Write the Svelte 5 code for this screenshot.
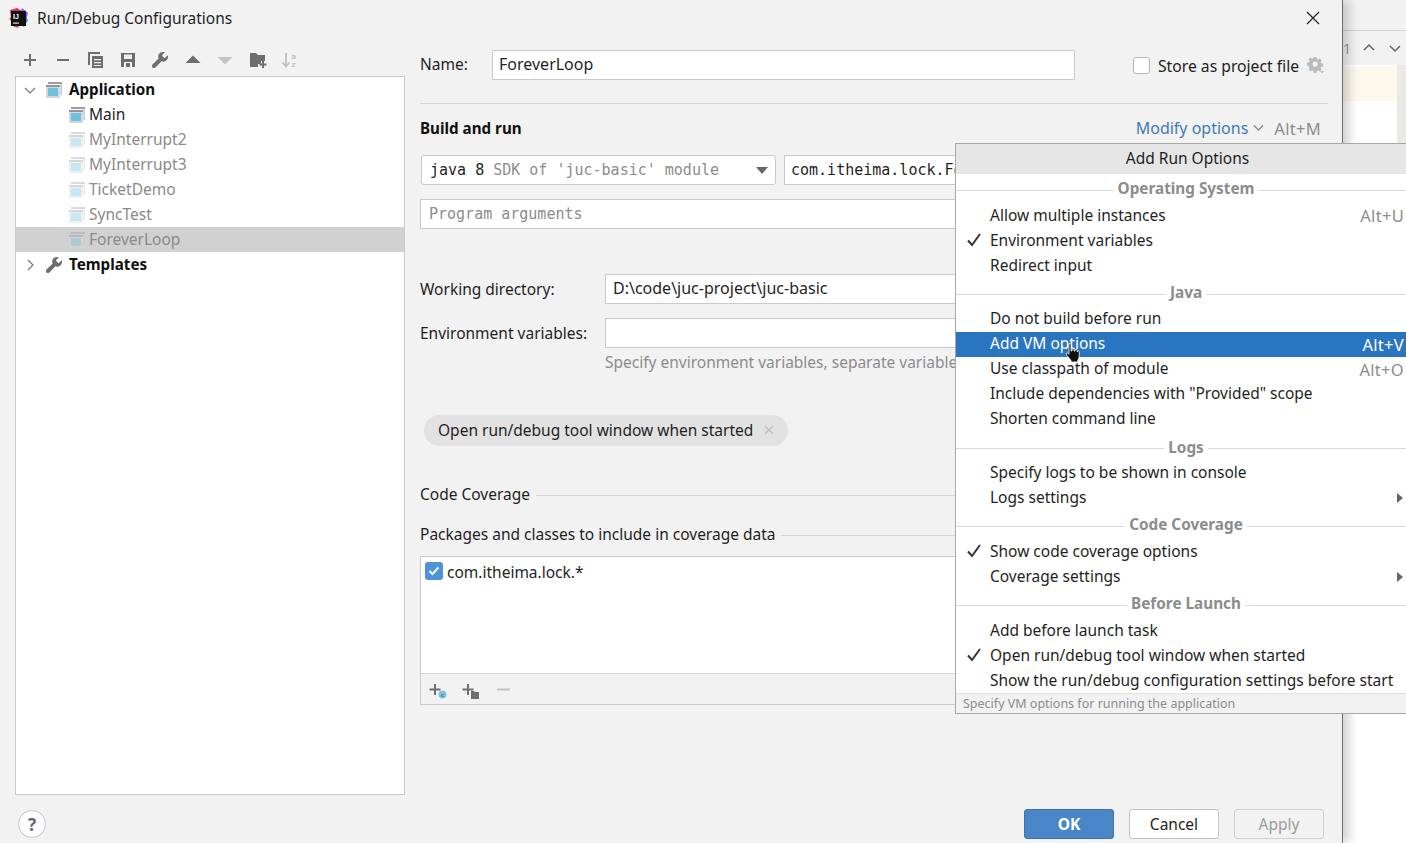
<script>
  const configs = [
    { name: 'Main', dim: false },
    { name: 'MyInterrupt2', dim: true },
    { name: 'MyInterrupt3', dim: true },
    { name: 'TicketDemo', dim: true },
    { name: 'SyncTest', dim: true },
    { name: 'ForeverLoop', dim: true, selected: true }
  ];
  const menu = [
    { title: 'Operating System', cls: 'h29 g-os', items: [
      { label: 'Allow multiple instances', key: 'Alt+U' },
      { label: 'Environment variables', check: true },
      { label: 'Redirect input' }
    ]},
    { title: 'Java', cls: 'h29 g-java', items: [
      { label: 'Do not build before run' },
      { label: 'Add VM options', key: 'Alt+V', active: true },
      { label: 'Use classpath of module', key: 'Alt+O' },
      { label: 'Include dependencies with "Provided" scope' },
      { label: 'Shorten command line' }
    ]},
    { title: 'Logs', cls: 'h28 low', items: [
      { label: 'Specify logs to be shown in console' },
      { label: 'Logs settings', sub: true }
    ]},
    { title: 'Code Coverage', cls: 'h29', items: [
      { label: 'Show code coverage options', check: true },
      { label: 'Coverage settings', sub: true }
    ]},
    { title: 'Before Launch', cls: 'h29', items: [
      { label: 'Add before launch task' },
      { label: 'Open run/debug tool window when started', check: true },
      { label: 'Show the run/debug configuration settings before start' }
    ]}
  ];
</script>

{#snippet appIcon(dim)}
  <svg class="ico" class:dim width="18" height="18" viewBox="0 0 18 18">
    <path d="M3 1h14v2H3z" fill="#9aa0a6"/>
    <path d="M15.500 3H17v11h-1.500z" fill="#c3c6c9"/>
    <rect x="1" y="4" width="14" height="13" fill="#d5d8da"/>
    <rect x="1" y="4" width="14" height="2" fill="#8f959b"/>
    <rect x="3" y="7" width="10" height="8" fill="#6fc1e0"/>
  </svg>
{/snippet}

{#snippet wrench(size)}
  <svg class="ico" width={size} height={size} viewBox="0 0 18 18">
    <path d="M16.800 4.200 13.600 7.300 10.800 4.500 13.900 1.300C11.700.4 9.100 1 7.900 3 7 4.400 7 6 7.600 7.400L1.500 13.500c-.8.800-.8 2.100 0 2.900.8.800 2.100.8 2.900 0l6.100-6.100c1.500.6 3.200.4 4.500-.6 1.800-1.300 2.500-3.600 1.800-5.500z" fill="#6e6e6e"/>
  </svg>
{/snippet}

<div class="screen">
  <div class="backdrop">
    <div class="bg-top"></div>
    <div class="bg-nav">
      <span class="bg-num">1</span>
      <svg width="14" height="10" viewBox="0 0 14 10"><path d="M2 7l5-5 5 5" fill="none" stroke="#666" stroke-width="1.500"/></svg>
      <svg width="14" height="10" viewBox="0 0 14 10"><path d="M2 3l5 5 5-5" fill="none" stroke="#666" stroke-width="1.500"/></svg>
    </div>
    <div class="bg-editor">
      <div class="bg-code"><div class="bg-yellow"></div></div>
      <div class="bg-gutter"></div>
    </div>
  </div>

  <section class="dialog">
    <header class="titlebar">
      <svg class="logo" width="22" height="22" viewBox="0 0 22 22">
        <path d="M3 3l7-2 5 3-4 7-7 1z" fill="#e0325f"/>
        <path d="M15 1l6 5-3 10-5-8z" fill="#7c5cff"/>
        <path d="M2 11l5 9 5 1-4-11z" fill="#f0562f"/>
        <path d="M17 20l4-7-4-5-5 8z" fill="#3a7be8"/>
        <rect x="4" y="4" width="15" height="15" fill="#111"/>
        <text x="6" y="12" class="logo-t">IJ</text>
        <rect x="6" y="15.500" width="6" height="1.200" fill="#ddd"/>
      </svg>
      <span class="title">Run/Debug Configurations</span>
      <svg class="close" width="14" height="14" viewBox="0 0 14 14"><path d="M1 1l12 12M13 1L1 13" stroke="#222" stroke-width="1.200"/></svg>
    </header>

    <div class="body">
      <aside class="left">
        <div class="toolbar">
          <span><svg width="16" height="16" viewBox="0 0 16 16"><path d="M8 2v12M2 8h12" stroke="#6e6e6e" stroke-width="2"/></svg></span>
          <span><svg width="16" height="16" viewBox="0 0 16 16"><path d="M2 8h12" stroke="#6e6e6e" stroke-width="2"/></svg></span>
          <span><svg width="18" height="18" viewBox="0 0 18 18"><path d="M2 1h12v2H4v11H2z" fill="#6e6e6e"/><path d="M6 5h11v12H6z" fill="#6e6e6e"/><path d="M8 8h7v1.300H8zM8 11h7v1.300H8zM8 14h7v1H8z" fill="#f2f2f2"/></svg></span>
          <span><svg width="18" height="18" viewBox="0 0 18 18"><path d="M2 2h14v14H2z" fill="#6e6e6e"/><path d="M5 3.500h8V8H5z" fill="#f2f2f2"/><path d="M5 11h8v5H5z" fill="#f2f2f2"/><path d="M7 12h4v4H7z" fill="#6e6e6e"/></svg></span>
          <span>{@render wrench(18)}</span>
          <span><svg width="16" height="16" viewBox="0 0 16 16"><path d="M8 3.500 15.500 11H.5z" fill="#6e6e6e"/></svg></span>
          <span><svg width="16" height="16" viewBox="0 0 16 16"><path d="M8 12.500 15.500 5H.5z" fill="#c4c4c4"/></svg></span>
          <span><svg width="18" height="18" viewBox="0 0 18 18"><path d="M1 2h6l2 2h7v6h-4v3H9v3H1z" fill="#6e6e6e"/><path d="M14 10v7M10.500 13.500h7" stroke="#6e6e6e" stroke-width="2"/></svg></span>
          <span><svg width="18" height="18" viewBox="0 0 18 18"><path d="M5 2v13M1.500 11.500 5 15.500l3.500-4" fill="none" stroke="#c0c0c0" stroke-width="1.800"/><text x="10.500" y="7.500" class="az">a</text><text x="10.500" y="16" class="az">z</text></svg></span>
        </div>
        <div class="tree">
          <div class="row top">
            <svg class="chev" width="12" height="12" viewBox="0 0 12 12"><path d="M1 4l5 5 5-5" fill="none" stroke="#777" stroke-width="1.200"/></svg>
            {@render appIcon(false)}
            <b>Application</b>
          </div>
          {#each configs as c}
            <div class="row child" class:selected={c.selected} class:muted={c.dim}>
              {@render appIcon(c.dim)}
              <span>{c.name}</span>
            </div>
          {/each}
          <div class="row top">
            <svg class="chev" width="12" height="12" viewBox="0 0 12 12"><path d="M4 1l5 5-5 5" fill="none" stroke="#777" stroke-width="1.200"/></svg>
            {@render wrench(18)}
            <b>Templates</b>
          </div>
        </div>
      </aside>

      <main class="right">
        <div class="name-row">
          <label class="name-label" for="cfg-name">Name:</label>
          <input id="cfg-name" class="field name-field" value="ForeverLoop" />
          <span class="box"></span>
          <span class="store">Store as project file</span>
          <svg class="gear" width="18" height="18" viewBox="0 0 18 18"><path d="M7.500 1h3l.4 2.200 1.500.7 1.900-1.200 2 2-1.200 1.900.7 1.500 2.200.4v3l-2.200.4-.7 1.500 1.200 1.900-2 2-1.900-1.200-1.500.7-.4 2.200h-3l-.4-2.200-1.500-.7-1.900 1.200-2-2 1.200-1.900-.7-1.500L0 10.500v-3l2.200-.4.700-1.500L1.700 3.700l2-2 1.900 1.200 1.500-.7z" transform="scale(.9)" fill="#b9bcbe"/><circle cx="8.100" cy="8.100" r="2.600" fill="#f2f2f2"/><path d="M13 15h4l-2 2.500z" fill="#b9bcbe"/></svg>
        </div>
        <div class="sep"></div>
        <div class="build-head">
          <b>Build and run</b>
          <span class="modify">Modify options
            <svg width="11" height="8" viewBox="0 0 11 8"><path d="M1 1.500l4.500 4.500L10 1.500" fill="none" stroke="#7a8a99" stroke-width="1.400"/></svg>
          </span>
          <span class="alt">Alt+M</span>
        </div>
        <div class="build-row">
          <div class="field select mono">
            <span>java 8 <i>SDK of 'juc-basic' module</i></span>
            <svg width="12" height="7" viewBox="0 0 12 7"><path d="M0 0h12L6 7z" fill="#666"/></svg>
          </div>
          <div class="field main-class mono">com.itheima.lock.ForeverLoop</div>
        </div>
        <div class="field args mono"><i>Program arguments</i></div>
        <div class="form-row wd">
          <span class="form-label">Working directory:</span>
          <div class="field grow">D:\code\juc-project\juc-basic</div>
        </div>
        <div class="form-row env">
          <span class="form-label">Environment variables:</span>
          <div class="field grow"></div>
        </div>
        <div class="hint">Specify environment variables, separate variables with semicolons</div>
        <div class="chip">
          <span>Open run/debug tool window when started</span>
          <svg width="10" height="10" viewBox="0 0 10 10"><path d="M1 1l8 8M9 1L1 9" stroke="#bdbdbd" stroke-width="1.200"/></svg>
        </div>
        <div class="title-line cov1"><span>Code Coverage</span><div></div></div>
        <div class="title-line cov2"><span>Packages and classes to include in coverage data</span><div></div></div>
        <div class="pkg">
          <div class="pkg-list">
            <span class="checked">
              <svg width="12" height="10" viewBox="0 0 12 10"><path d="M1.500 5l3 3 6-6.500" fill="none" stroke="#fff" stroke-width="2"/></svg>
            </span>
            <span>com.itheima.lock.*</span>
          </div>
          <div class="pkg-bar">
            <svg width="20" height="18" viewBox="0 0 20 18"><path d="M7 2v11M1.500 7.500h11" stroke="#6e6e6e" stroke-width="2"/><circle cx="14.500" cy="12.500" r="4" fill="#7fc4db"/><text x="12.700" y="15" class="c">c</text></svg>
            <svg width="20" height="18" viewBox="0 0 20 18"><path d="M7 2v11M1.500 7.500h11" stroke="#6e6e6e" stroke-width="2"/><path d="M10 9h3l1 1h4v7h-8z" fill="#6e6e6e"/></svg>
            <svg class="minus" width="16" height="18" viewBox="0 0 16 18"><path d="M1 7.500h13" stroke="#c4c4c4" stroke-width="2"/></svg>
          </div>
        </div>
      </main>
    </div>

    <footer class="footer">
      <span class="help">?</span>
      <div class="buttons">
        <button class="btn ok">OK</button>
        <button class="btn">Cancel</button>
        <button class="btn off">Apply</button>
      </div>
    </footer>
  </section>

  <div class="popup">
    <div class="popup-head">Add Run Options</div>
    {#each menu as group}
      <div class="group {group.cls}">
        <div class="group-title"><div></div><span>{group.title}</span><div></div></div>
        {#each group.items as it}
          <div class="item" class:active={it.active}>
            {#if it.check}
              <svg class="tick" width="16" height="14" viewBox="0 0 16 14"><path d="M2 7.500l4 4.500 8-11" fill="none" stroke="#333" stroke-width="2"/></svg>
            {/if}
            <span class="item-label">{it.label}</span>
            {#if it.key}<span class="key">{it.key}</span>{/if}
            {#if it.sub}<svg class="sub" width="8" height="10" viewBox="0 0 8 10"><path d="M1 0l6 5-6 5z" fill="#666"/></svg>{/if}
          </div>
        {/each}
      </div>
    {/each}
    <div class="status">Specify VM options for running the application</div>
  </div>

  <svg class="cursor" width="16" height="20" viewBox="0 0 16 20">
    <path d="M4 1.500c0-1.300 2-1.300 2 0V8l1 0V6.500c0-1 2-1 2 0V8h1V7c0-1 2-1 2 0v1.500h.5c0-1 1.700-1 1.700.2V13c0 2-.8 3-1.500 4.500V19H6v-1.500L1.500 12c-1-1.500.5-2.800 1.800-1.500L4 11.200z" fill="#111" stroke="#fff" stroke-width=".8"/>
  </svg>
</div>

<style>
  :global(body) { margin: 0; }
  .screen {
    position: relative; width: 1406px; height: 843px; overflow: hidden; background: #fff;
    font-family: "Noto Sans", "Open Sans", sans-serif; font-size: 15.500px; color: #1f1f1f;
  }
  b { font-weight: 700; color: #111; font-size: 15.200px; }
  i { font-style: normal; color: #8c8c8c; }
  .backdrop { position: absolute; inset: 0 0 0 1342px; display: flex; flex-direction: column; }
  .bg-top { height: 30px; background: #f2f2f2; border-bottom: 1px solid #d4d4d4; }
  .bg-nav { height: 34px; background: #f2f2f2; display: flex; align-items: center; gap: 12px; padding-left: 1px; color: #999; }
  .bg-num { width: 7px; font-size: 14px; }
  .bg-editor { flex: 1; display: flex; }
  .bg-code { flex: 1; }
  .bg-yellow { height: 34px; margin-top: 2px; background: #fdf8ec; }
  .bg-gutter { width: 9px; background: #e9e9e6; height: 80px; }

  .dialog {
    position: absolute; left: 0; top: 0; width: 1342px; height: 843px; background: #f2f2f2;
    border-right: 1px solid #6d6d6d; box-shadow: 6px 0 10px rgba(0,0,0,.18);
    display: flex; flex-direction: column; box-sizing: content-box;
  }
  .titlebar { height: 36px; display: flex; align-items: center; padding-left: 7px; flex: none; }
  .logo { flex: none; margin-right: 8px; }
  .logo-t { font: 700 7px "Liberation Sans", sans-serif; fill: #fff; }
  .title { padding-bottom: 1px; }
  .close { margin-left: auto; margin-right: 22px; }
  .body { flex: 1; display: flex; min-height: 0; }
  .left { width: 390px; margin-left: 15px; display: flex; flex-direction: column; flex: none; }
  .toolbar { height: 40px; display: grid; grid-auto-flow: column; grid-auto-columns: 32.500px; align-items: center; justify-content: start; justify-items: center; margin-left: -1px; flex: none; padding-top: 8px; box-sizing: border-box; }
  .toolbar span { display: flex; }
  .az { font: 8px "Liberation Sans", sans-serif; fill: #aaa; }
  .tree { flex: 1; background: #fff; border: 1px solid #c9c9c9; }
  .row { height: 25px; display: flex; align-items: center; white-space: nowrap; box-sizing: border-box; }
  .row b, .row span { padding-bottom: 2px; }
  .row.top { padding-left: 7px; }
  .row.top .chev { margin: 0 9px 0 1px; }
  .row.top b { margin-left: 6px; }
  .row.child { padding-left: 52px; gap: 3px; }
  .row.muted { color: #8a8a8a; }
  .row.selected { background: #d1d1d1; }
  .ico { flex: none; }
  .ico.dim { opacity: .38; }
  .chev { flex: none; }

  .right { flex: 1; margin-left: 15px; margin-right: 14px; min-width: 0; }
  .field { background: #fff; border: 1px solid #c9c9c9; box-sizing: border-box; height: 30px; display: flex; align-items: center; padding: 0 7px 2px; white-space: nowrap; overflow: hidden; color: #1f1f1f; font: inherit; }
  .mono { font-family: "DejaVu Sans Mono", "Liberation Mono", monospace; font-size: 15px; padding-bottom: 0; }
  .name-row { display: flex; align-items: center; height: 30px; margin-top: 14px; }
  .name-label { width: 72px; flex: none; padding-bottom: 2px; }
  .name-field { width: 583px; flex: none; border-radius: 1px; padding-left: 6px; font-size: 16px; }
  .box { width: 17px; height: 17px; background: #fff; border: 1px solid #b5b5b5; border-radius: 3px; margin-left: 58px; flex: none; box-sizing: border-box; }
  .store { margin-left: 8px; white-space: nowrap; padding-top: 1px; font-size: 15.700px; }
  .gear { margin-left: auto; margin-right: 3px; }
  .sep { height: 1px; background: #d4d4d4; margin-top: 23px; }
  .build-head { display: flex; align-items: center; height: 20px; margin-top: 14px; }
  .modify { margin-left: auto; color: #3f7ab8; display: flex; align-items: center; gap: 5px; font-size: 16px; }
  .alt { color: #8c8c8c; margin-left: 10px; margin-right: 7px; font-size: 16.500px; letter-spacing: .3px; }
  .build-row { display: flex; gap: 8px; margin-top: 17px; margin-left: 1px; }
  .select { width: 355px; flex: none; justify-content: space-between; padding-left: 8px; padding-right: 7px; border-radius: 3px; }
  .main-class { flex: 1; padding-left: 6px; }
  .args { margin-top: 14px; padding-left: 8px; }
  .form-row { display: flex; align-items: center; }
  .form-label { width: 185px; flex: none; padding-bottom: 1px; }
  .grow { flex: 1; font-size: 16px; }
  .wd { margin-top: 45px; }
  .env { margin-top: 14px; }
  .hint { margin: 3px 0 0 185px; width: 350px; overflow: hidden; color: #8c8c8c; white-space: nowrap; height: 22px; line-height: 22px; }
  .chip { display: inline-flex; align-items: center; gap: 11px; margin: 42px 0 0 4px; height: 31px; padding: 0 14px 1px 14px; border-radius: 16px; background: #e2e2e2; white-space: nowrap; box-sizing: border-box; }
  .title-line { display: flex; align-items: center; gap: 6px; white-space: nowrap; height: 20px; }
  .title-line span { padding-bottom: 2px; }
  .title-line div { flex: 1; height: 1px; background: #d4d4d4; }
  .cov1 { margin-top: 39px; }
  .cov2 { margin-top: 20px; }
  .pkg { margin-top: 11px; height: 149px; border: 1px solid #c9c9c9; box-sizing: border-box; display: flex; flex-direction: column; }
  .pkg-list { flex: 1; background: #fff; display: flex; align-items: flex-start; gap: 4px; padding: 5px 0 0 4px; border-bottom: 1px solid #d4d4d4; line-height: 20px; }
  .checked { width: 18px; height: 18px; background: #4c93dc; border-radius: 3px; display: flex; align-items: center; justify-content: center; flex: none; }
  .pkg-bar { height: 30px; flex: none; display: flex; align-items: center; gap: 13px; padding: 3px 0 0 7px; box-sizing: border-box; }
  .minus { margin-left: 2px; }
  .c { font: 700 6px "Liberation Sans", sans-serif; fill: #3a7f99; }

  .footer { height: 48px; flex: none; display: flex; align-items: center; padding: 10px 18px 0; box-sizing: border-box; }
  .help { width: 28px; height: 28px; border-radius: 50%; background: #fff; border: 1px solid #c4c4c4; box-sizing: border-box; display: flex; align-items: center; justify-content: center; color: #666; font-weight: 700; font-size: 17px; }
  .buttons { margin-left: auto; display: flex; gap: 15px; }
  .btn { width: 90px; height: 30px; background: #fff; border: 1px solid #c4c4c4; border-radius: 3px; padding: 0 0 1px; font: inherit; color: #1f1f1f; }
  .ok { background: #4a86c7; border-color: #3f75ae; color: #fff; font-weight: 700; }
  .off { background: #f2f2f2; color: #9a9a9a; border-color: #d0d0d0; }

  .popup { position: absolute; left: 955px; top: 143px; width: 462px; height: 571px; background: #fff; border: 1px solid #a8a8a8; box-sizing: border-box; display: flex; flex-direction: column; overflow: hidden; }
  .popup-head { height: 30px; flex: none; background: #e6e6e6; display: flex; align-items: center; justify-content: center; padding: 0 0 2px 3px; box-sizing: border-box; }
  .group { flex: none; }
  .group-title { height: 29px; display: flex; align-items: center; gap: 4px; color: #8c8c8c; font-weight: 700; font-size: 15.300px; box-sizing: border-box; }
  .group-title span { padding-bottom: 1px; }
  .group-title div { flex: 1; height: 1px; background: #d9d9d9; margin-top: 3px; }
  .h28 .group-title { height: 28px; }
  .low .group-title { padding-top: 2px; }
  .item { height: 25px; display: flex; align-items: center; padding: 0 12px 1px 34px; position: relative; white-space: nowrap; box-sizing: border-box; }
  .g-os .item { padding-bottom: 2px; }
  .g-java .item { padding-bottom: 4px; }
  .item.active { background: #2a75c0; color: #fff; }
  .item.active .key { color: #fff; }
  .tick { position: absolute; left: 10px; top: 5px; }
  .key { margin-left: auto; color: #8c8c8c; font-size: 16.500px; letter-spacing: .3px; margin-top: 2px; }
  .g-java .key { margin-top: 4px; }
  .sub { position: absolute; left: 440px; top: 8px; }
  .status { flex: 1; background: #f2f2f2; border-top: 1px solid #e4e4e4; font-size: 12.500px; color: #8c8c8c; padding-left: 7px; display: flex; align-items: center; }
  .cursor { position: absolute; left: 1065px; top: 343px; }
</style>
